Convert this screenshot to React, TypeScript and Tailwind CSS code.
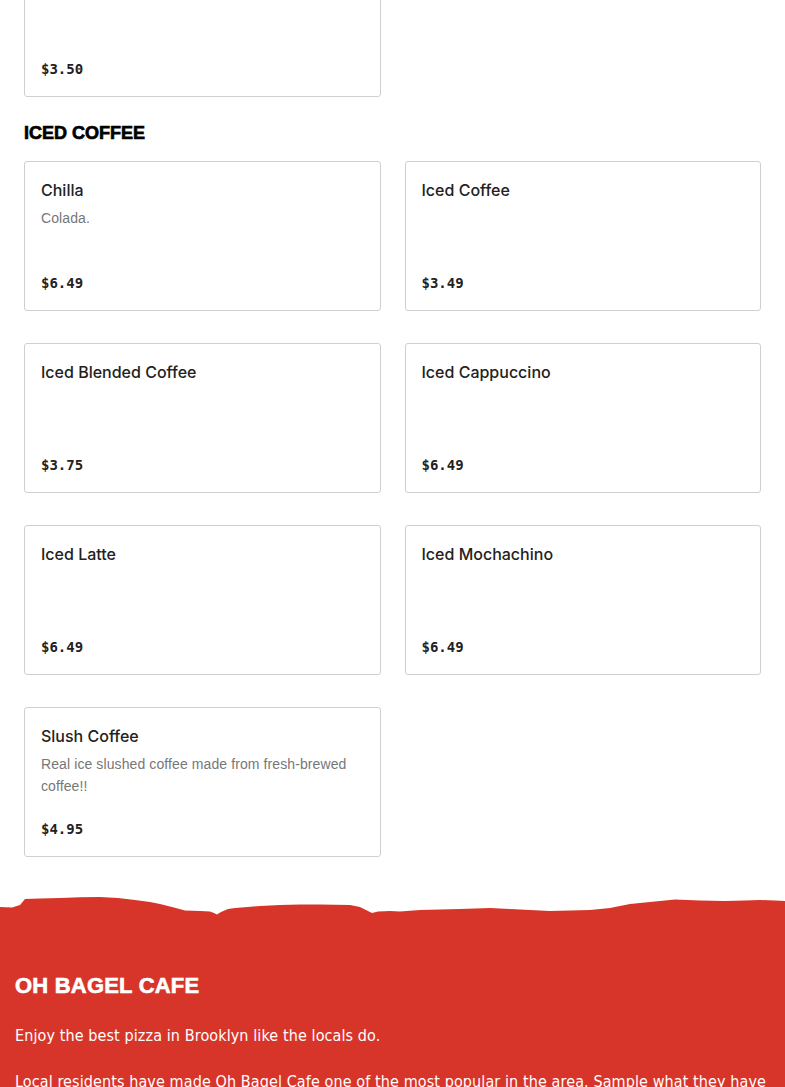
type Item = { name: string; price: string; desc?: string }

const icedCoffee: Item[] = [
  { name: 'Chilla', desc: 'Colada.', price: '$6.49' },
  { name: 'Iced Coffee', price: '$3.49' },
  { name: 'Iced Blended Coffee', price: '$3.75' },
  { name: 'Iced Cappuccino', price: '$6.49' },
  { name: 'Iced Latte', price: '$6.49' },
  { name: 'Iced Mochachino', price: '$6.49' },
  { name: 'Slush Coffee', desc: 'Real ice slushed coffee made from fresh-brewed coffee!!', price: '$4.95' },
]

function MenuCard({ item }: { item: Item }) {
  return (
    <div className="h-[150px] flex flex-col bg-white border border-[#cfcfcf] rounded-[3px] px-4 pt-4 pb-[15px]">
      {item.name && (
        <p className="text-[16px] leading-6 font-medium text-[#222] font-['Inter',sans-serif]">{item.name}</p>
      )}
      {item.desc && (
        <p className="mt-[5px] text-[14px] leading-[22px] text-[#777] tracking-[0.1px] font-['Liberation_Sans',Arial,sans-serif]">
          {item.desc}
        </p>
      )}
      <p className="mt-auto text-[14px] leading-6 font-bold text-[#222] font-['DejaVu_Sans_Mono',monospace]">
        {item.price}
      </p>
    </div>
  )
}

// ragged paper edge above the red footer
function TornEdge() {
  return (
    <svg viewBox="0 0 785 26" className="block w-full h-[26px]" preserveAspectRatio="none">
      <path
        fill="#d8352a"
        d="M0 14 L12 14.5 L20 12 L25 6 L40 5.5 L60 5 L80 4.2 L100 4 L118 5 L135 7 L150 9 L160 11 L172 14 L185 17.5 L200 18 L210 18.5 L214 20 L217 21.5 L221 19 L228 16 L235 15 L248 14 L260 13 L280 12 L300 11.5 L320 11.5 L350 12 L360 14 L366 17 L372 20 L378 18.5 L390 18 L400 18.5 L420 17 L440 16.5 L460 16 L490 15 L510 16 L530 17 L550 18 L570 17.5 L590 17 L610 15 L630 11 L650 9 L675 6.5 L700 7.5 L725 8 L745 7.5 L760 7 L775 7.5 L785 8 L785 26 L0 26 Z"
      />
    </svg>
  )
}

export default function App() {
  return (
    <main className="min-h-screen bg-white overflow-hidden font-['Inter',sans-serif]">
      <section className="px-6">
        <div className="grid grid-cols-2 gap-x-6 -mt-[53px]">
          <MenuCard item={{ name: '', price: '$3.50' }} />
        </div>

        <h2 className="mt-6 mb-4 text-[18px] leading-6 font-bold text-black uppercase [-webkit-text-stroke:0.7px_black] font-['Liberation_Sans',Arial,sans-serif]">
          Iced Coffee
        </h2>

        <div className="grid grid-cols-2 gap-x-6 gap-y-8">
          {icedCoffee.map((item) => (
            <MenuCard key={item.name} item={item} />
          ))}
        </div>
      </section>

      <footer className="mt-9">
        <TornEdge />
        <div className="bg-[#d8352a] px-[15px] pt-[53px] pb-10 text-white">
          <h3 className="text-[22px] leading-7 font-bold uppercase tracking-[0.2px] [-webkit-text-stroke:0.6px_white] font-['Liberation_Sans',Arial,sans-serif]">
            Oh Bagel Cafe
          </h3>
          <p className="mt-6 text-[16px] leading-6 tracking-[0.1px] font-['Liberation_Sans_Narrow','DejaVu_Sans_Condensed',sans-serif]">
            Enjoy the best pizza in Brooklyn like the locals do.
          </p>
          <p className="mt-[22px] text-[16px] leading-6 tracking-[0.1px] font-['Liberation_Sans_Narrow','DejaVu_Sans_Condensed',sans-serif]">
            Local residents have made Oh Bagel Cafe one of the most popular in the area. Sample what they have
            been raving about and order online today.
          </p>
        </div>
      </footer>
    </main>
  )
}
